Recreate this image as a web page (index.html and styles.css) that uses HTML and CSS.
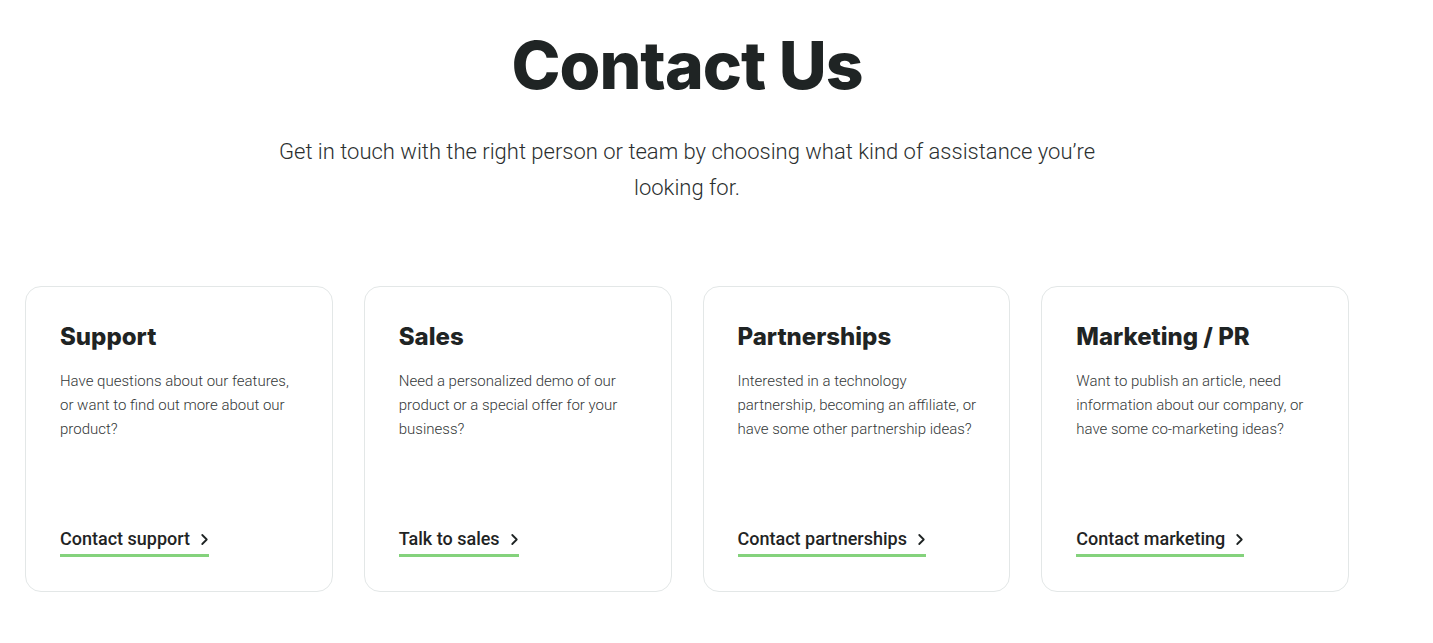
FILE: index.html
```html
<html>
  <head>
    <link rel="stylesheet" href="styles.css">
  </head>
  <body>
    <section class="contact">
      <h1 class="contact-title">Contact Us</h1>
      <p class="contact-lead">
        Get in touch with the right person or team by choosing what kind of assistance you’re looking for.
      </p>

      <div class="cards">
        <div class="card">
          <h2 class="card-title">Support</h2>
          <p class="card-text">Have questions about our features, or want to find out more about our product?</p>
          <a class="card-link" href="#">Contact support
            <svg class="chevron" viewBox="0 0 10 14" width="9" height="13"><path d="M2.5 2 L7.5 7 L2.5 12" /></svg>
          </a>
        </div>
        <div class="card">
          <h2 class="card-title">Sales</h2>
          <p class="card-text">Need a personalized demo of our product or a special offer for your business?</p>
          <a class="card-link" href="#">Talk to sales
            <svg class="chevron" viewBox="0 0 10 14" width="9" height="13"><path d="M2.5 2 L7.5 7 L2.5 12" /></svg>
          </a>
        </div>
        <div class="card">
          <h2 class="card-title">Partnerships</h2>
          <p class="card-text">Interested in a technology partnership, becoming an affiliate, or have some other partnership ideas?</p>
          <a class="card-link" href="#">Contact partnerships
            <svg class="chevron" viewBox="0 0 10 14" width="9" height="13"><path d="M2.5 2 L7.5 7 L2.5 12" /></svg>
          </a>
        </div>
        <div class="card">
          <h2 class="card-title">Marketing / PR</h2>
          <p class="card-text">Want to publish an article, need information about our company, or have some co-marketing ideas?</p>
          <a class="card-link" href="#">Contact marketing
            <svg class="chevron" viewBox="0 0 10 14" width="9" height="13"><path d="M2.5 2 L7.5 7 L2.5 12" /></svg>
          </a>
        </div>
      </div>
    </section>
  </body>
</html>
```

FILE: styles.css
```css
body {
  margin: 0;
  background: #ffffff;
  color: #1f2424;
  font-family: Roboto, "Liberation Sans", sans-serif;
}

.contact {
  width: 1374px;
  box-sizing: border-box;
  padding: 24px 25px 40px;
  text-align: center;
}

.contact-title {
  margin: 0;
  font-family: Inter, "Liberation Sans", sans-serif;
  font-weight: 800;
  font-size: 66px;
  line-height: 82px;
  letter-spacing: -1px;
  color: #1f2424;
}

.contact-lead {
  width: 840px;
  margin: 28px auto 0;
  font-size: 22px;
  font-weight: 300;
  line-height: 36px;
  color: #2b2f2f;
}

.cards {
  display: grid;
  grid-template-columns: repeat(4, 1fr);
  gap: 31px;
  margin-top: 80px;
  text-align: left;
}

.card {
  display: flex;
  flex-direction: column;
  align-items: flex-start;
  min-height: 306px;
  box-sizing: border-box;
  padding: 35px 28px 34px 34px;
  border: 1px solid #e3e7e7;
  border-radius: 16px;
}

.card-title {
  margin: 0;
  font-family: Inter, "Liberation Sans", sans-serif;
  font-weight: 800;
  font-size: 24px;
  line-height: 30px;
  color: #1f2424;
}

.card-text {
  margin: 17px 0 0;
  font-size: 15px;
  font-weight: 300;
  line-height: 24px;
  color: #343838;
}

.card-link {
  display: flex;
  align-items: center;
  gap: 10px;
  margin-top: auto;
  padding-bottom: 3px;
  border-bottom: 3px solid #84d27c;
  font-size: 18px;
  font-weight: 500;
  line-height: 24px;
  color: #1f2424;
  text-decoration: none;
}

.chevron path {
  fill: none;
  stroke: #1f2424;
  stroke-width: 2;
  stroke-linecap: round;
  stroke-linejoin: round;
}
```
